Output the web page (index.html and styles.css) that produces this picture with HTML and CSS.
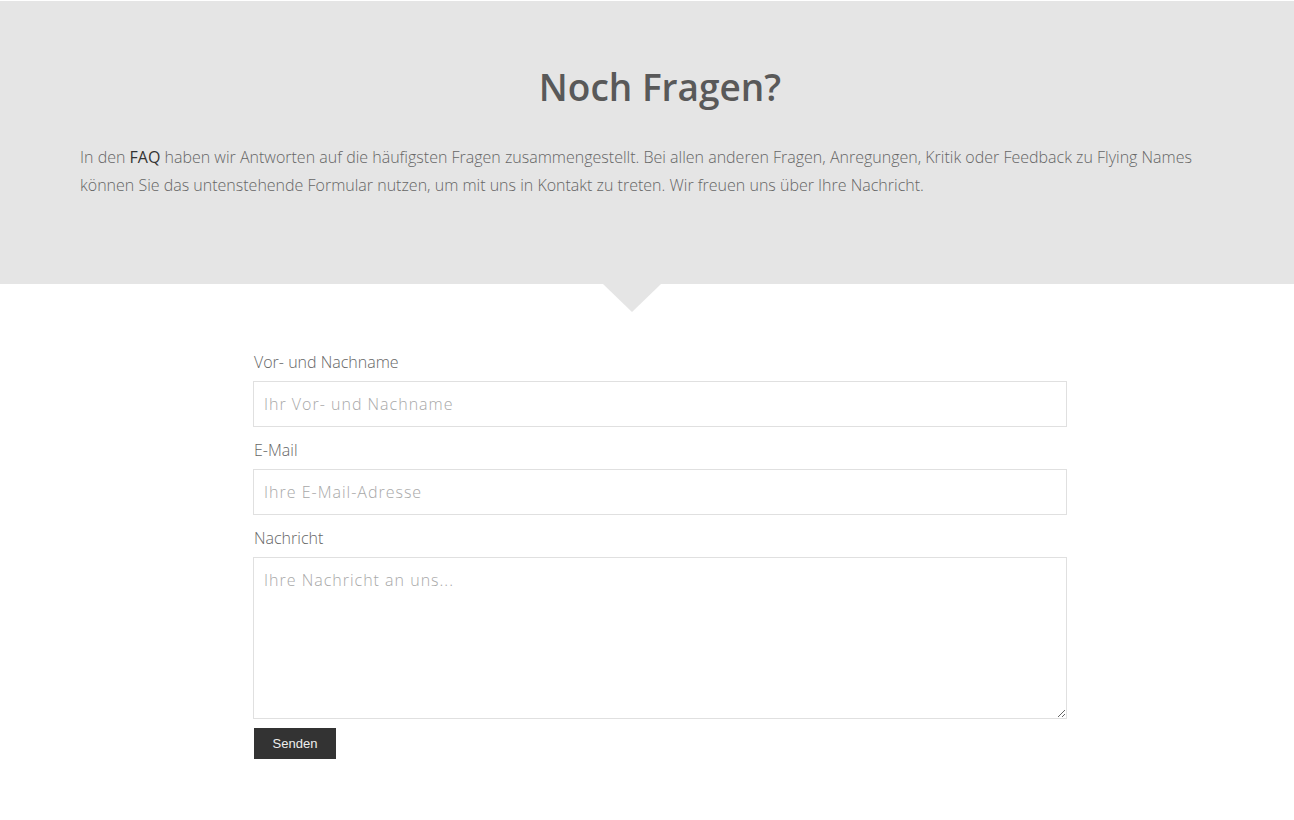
FILE: index.html
```html
<!DOCTYPE html>
<html lang="de">
<head>
<meta charset="utf-8">
<title>Noch Fragen?</title>
<link rel="stylesheet" href="styles.css">
</head>
<body>
<section class="intro">
  <div class="container">
    <h1 class="title">Noch Fragen?</h1>
    <p class="lead">In den <a href="#" class="link">FAQ</a> haben wir Antworten auf die häufigsten Fragen zusammengestellt. Bei allen anderen Fragen, Anregungen, Kritik oder Feedback zu Flying Names können Sie das untenstehende Formular nutzen, um mit uns in Kontakt zu treten. Wir freuen uns über Ihre Nachricht.</p>
  </div>
</section>
<main class="container">
  <form class="contact">
    <label class="label" for="name">Vor- und Nachname</label>
    <input class="field" id="name" type="text" placeholder="Ihr Vor- und Nachname">
    <label class="label" for="email">E-Mail</label>
    <input class="field" id="email" type="email" placeholder="Ihre E-Mail-Adresse">
    <label class="label" for="msg">Nachricht</label>
    <textarea class="field area" id="msg" placeholder="Ihre Nachricht an uns..."></textarea>
    <button class="submit" type="button">Senden</button>
  </form>
</main>
</body>
</html>
```
FILE: styles.css
```css
html, body {
  margin: 0;
  padding: 0;
  background: #fff;
}
body {
  padding-top: 1px;
  font-family: "Open Sans", "Liberation Sans", sans-serif;
  font-weight: 300;
  color: #666;
}
.container {
  padding: 0 54px 0 80px;
}
.intro {
  position: relative;
  background: #e5e5e5;
  height: 283px;
  box-sizing: border-box;
  padding-top: 64px;
}
.intro::after {
  content: "";
  position: absolute;
  left: 603px;
  top: 100%;
  width: 0;
  height: 0;
  border-left: 29px solid transparent;
  border-right: 29px solid transparent;
  border-top: 28px solid #e5e5e5;
}
.title {
  margin: 0;
  text-align: center;
  font-size: 37px;
  line-height: 44px;
  font-weight: 600;
  color: #595959;
}
.lead {
  margin: 34px 0 0;
  font-size: 16px;
  line-height: 28px;
  color: #666;
}
.link {
  color: #333;
  font-weight: 400;
  text-decoration: none;
}
.contact {
  width: 814px;
  margin: 0 auto;
  padding-top: 66px;
  display: flex;
  flex-direction: column;
  align-items: flex-start;
}
.label {
  display: block;
  margin-left: 1px;
  font-size: 16px;
  line-height: 24px;
  color: #666;
}
.field {
  display: block;
  box-sizing: border-box;
  width: 814px;
  height: 46px;
  margin: 7px 0 11px;
  padding: 0 10px;
  border: 1px solid #e0e0e0;
  background: #fff;
  font-family: "Open Sans", "Liberation Sans", sans-serif;
  font-weight: 300;
  font-size: 16px;
  letter-spacing: 1px;
  color: #666;
  outline: none;
}
.field::placeholder {
  color: #a8a8a8;
  opacity: 1;
}
.area {
  height: 162px;
  margin-bottom: 9px;
  padding: 10px;
  line-height: 24px;
  resize: vertical;
}
.submit {
  margin-left: 1px;
  width: 82px;
  height: 31px;
  padding: 0;
  border: 0;
  background: #333;
  color: #eee;
  font-family: "Liberation Sans", Arial, sans-serif;
  font-size: 13px;
  cursor: pointer;
}
```
